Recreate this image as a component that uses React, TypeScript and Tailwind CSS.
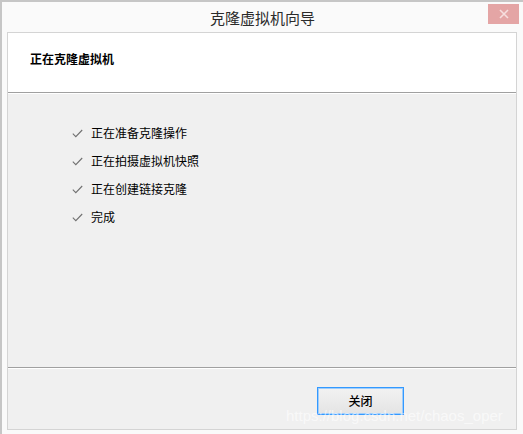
const steps = ["正在准备克隆操作", "正在拍摄虚拟机快照", "正在创建链接克隆", "完成"];

function Check() {
  return (
    <svg width="11" height="9" viewBox="0 0 11 9" className="shrink-0">
      <path d="M0.8 4.6 L3.8 7.6 L10.2 1" fill="none" stroke="#707070" strokeWidth="1.1" />
    </svg>
  );
}

export default function App() {
  return (
    <div
      className="relative flex h-[434px] w-[523px] flex-col overflow-hidden border-l-2 border-t-2 border-[#c6c6c6] bg-[#fafafa]"
      style={{ fontFamily: '"Noto Sans CJK SC", "Noto Sans", sans-serif' }}
    >
      {/* title bar */}
      <div className="relative flex h-[30px] items-center justify-center">
        <span className="text-[15px] leading-none text-[#2b2b2b]">克隆虚拟机向导</span>
        <div className="absolute right-[4px] top-[2px] flex h-[20px] w-[31px] items-center justify-center bg-[#e4a5a5]">
          <svg width="10" height="10" viewBox="0 0 10 10">
            <path d="M1 1 L9 9 M9 1 L1 9" stroke="#f6dede" strokeWidth="1.6" />
          </svg>
        </div>
      </div>

      {/* dialog body */}
      <div className="ml-[5px] flex h-[398px] w-[510px] flex-col border border-[#d4d4d4]">
        <div className="h-[59px] bg-white px-[22px] pt-[12px]">
          <span className="text-[12px] font-bold leading-none text-black">正在克隆虚拟机</span>
        </div>
        <div className="h-px bg-[#a0a0a0]" />
        <div className="h-px bg-white" />

        <div className="flex h-[273px] flex-col gap-[10px] bg-[#f0f0f0] pl-[64px] pt-[30px]">
          {steps.map((s) => (
            <div key={s} className="flex h-[18px] items-center gap-[8px]">
              <Check />
              <span className="text-[12px] leading-none text-black">{s}</span>
            </div>
          ))}
        </div>
        <div className="h-px bg-[#a0a0a0]" />
        <div className="h-px bg-white" />

        <div className="flex flex-1 items-start bg-[#f0f0f0] pl-[309px] pt-[18px]">
          <button className="flex h-[28px] w-[87px] items-center justify-center border border-solid border-[#3399ff] bg-gradient-to-b from-[#f2f2f2] to-[#e4e4e4] text-[12px] font-medium text-black shadow-[inset_0_0_0_1px_#9fcdfb]">
            关闭
          </button>
        </div>
      </div>

      {/* watermark */}
      <span
        className="pointer-events-none absolute left-[284px] top-[406px] whitespace-nowrap text-[15px] leading-none text-white/60"
        style={{ fontFamily: '"Liberation Sans", Arial, sans-serif' }}
      >
        https://blog.csdn.net/chaos_oper
      </span>
    </div>
  );
}
